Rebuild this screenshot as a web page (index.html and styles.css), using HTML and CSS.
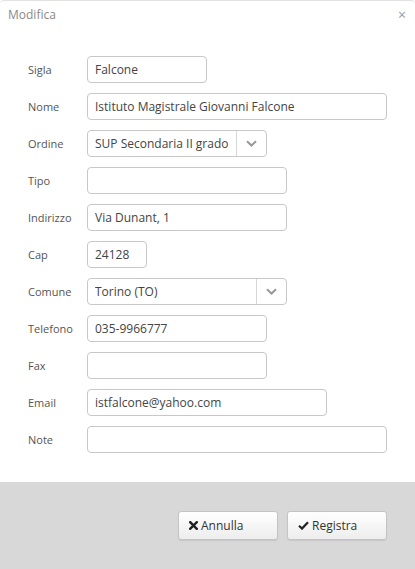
FILE: index.html
```html
<!DOCTYPE html>
<html lang="it">
<head>
<meta charset="utf-8">
<title>Modifica</title>
<link rel="stylesheet" href="styles.css">
</head>
<body>
<div class="modal">
  <div class="modal-header">
    <span class="modal-title">Modifica</span>
    <span class="close">×</span>
  </div>
  <div class="modal-body">
    <div class="row"><label>Sigla</label><div class="field w120">Falcone</div></div>
    <div class="row"><label>Nome</label><div class="field w300">Istituto Magistrale Giovanni Falcone</div></div>
    <div class="row"><label>Ordine</label>
      <div class="field select w180"><span class="val">SUP Secondaria II grado</span><span class="arrow"><svg width="11" height="7" viewBox="0 0 11 7"><path d="M1 1.2 L5.5 5.5 L10 1.2" fill="none" stroke="#999" stroke-width="2"/></svg></span></div>
    </div>
    <div class="row"><label>Tipo</label><div class="field w200"></div></div>
    <div class="row"><label>Indirizzo</label><div class="field w200">Via Dunant, 1</div></div>
    <div class="row"><label>Cap</label><div class="field w60">24128</div></div>
    <div class="row"><label>Comune</label>
      <div class="field select w200"><span class="val">Torino (TO)</span><span class="arrow"><svg width="11" height="7" viewBox="0 0 11 7"><path d="M1 1.2 L5.5 5.5 L10 1.2" fill="none" stroke="#999" stroke-width="2"/></svg></span></div>
    </div>
    <div class="row"><label>Telefono</label><div class="field w180">035-9966777</div></div>
    <div class="row"><label>Fax</label><div class="field w180"></div></div>
    <div class="row"><label>Email</label><div class="field w240">istfalcone@yahoo.com</div></div>
    <div class="row"><label>Note</label><div class="field w300"></div></div>
  </div>
  <div class="modal-footer">
    <button class="btn"><svg width="9" height="9" viewBox="0 0 9 9"><path d="M1.2 1.2 L7.8 7.8 M7.8 1.2 L1.2 7.8" stroke="#222" stroke-width="2.4" stroke-linecap="square"/></svg>Annulla</button>
    <button class="btn"><svg width="11" height="9" viewBox="0 0 11 9"><path d="M1 4.8 L4 7.6 L10 1.2" fill="none" stroke="#222" stroke-width="2.2"/></svg>Registra</button>
  </div>
</div>
</body>
</html>
```

FILE: styles.css
```css
html, body {
  margin: 0;
  padding: 0;
  background: #fff;
  font-family: "Open Sans", "DejaVu Sans", sans-serif;
}
.modal {
  width: 415px;
  height: 569px;
  display: flex;
  flex-direction: column;
  border-top: 1px solid #e2e2e2;
  border-radius: 4px 4px 0 0;
  box-sizing: border-box;
}
.modal-header {
  height: 27px;
  display: flex;
  align-items: center;
  justify-content: space-between;
  padding: 0 8px 0 8px;
}
.modal-title {
  font-size: 12px;
  color: #8a8a8a;
}
.close {
  font-size: 14px;
  color: #9a9a9a;
  margin-right: 1px;
}
.modal-body {
  padding: 28px 28px 29px 28px;
  display: flex;
  flex-direction: column;
  gap: 10px;
}
.row {
  display: flex;
  align-items: center;
  height: 27px;
}
.row label {
  width: 59px;
  font-size: 11px;
  color: #555;
}
.field {
  height: 27px;
  box-sizing: border-box;
  border: 1px solid #c8c8c8;
  border-radius: 4px;
  padding: 0 7px;
  font-size: 12px;
  color: #444;
  display: flex;
  align-items: center;
}
.w60 { width: 60px; }
.w120 { width: 120px; }
.w180 { width: 180px; }
.w200 { width: 200px; }
.w240 { width: 240px; }
.w300 { width: 300px; }
.select {
  padding-right: 0;
}
.select .val {
  flex: 1;
  white-space: nowrap;
  overflow: hidden;
}
.select .arrow {
  width: 29px;
  height: 100%;
  border-left: 1px solid #d6d6d6;
  display: flex;
  align-items: center;
  justify-content: center;
}
.modal-footer {
  flex: 1;
  background: #d8d8d8;
  display: flex;
  justify-content: flex-end;
  align-items: flex-start;
  gap: 9px;
  padding: 29px 28px 0 0;
}
.btn {
  width: 100px;
  height: 29px;
  box-sizing: border-box;
  border: 1px solid #c4c4c4;
  border-radius: 3px;
  background: linear-gradient(#ffffff, #ededed);
  box-shadow: 0 1px 1px rgba(0,0,0,0.08);
  display: flex;
  align-items: center;
  gap: 3px;
  padding: 0 0 0 10px;
  font-family: "Open Sans", "DejaVu Sans", sans-serif;
  font-size: 12px;
  color: #333;
}
```
